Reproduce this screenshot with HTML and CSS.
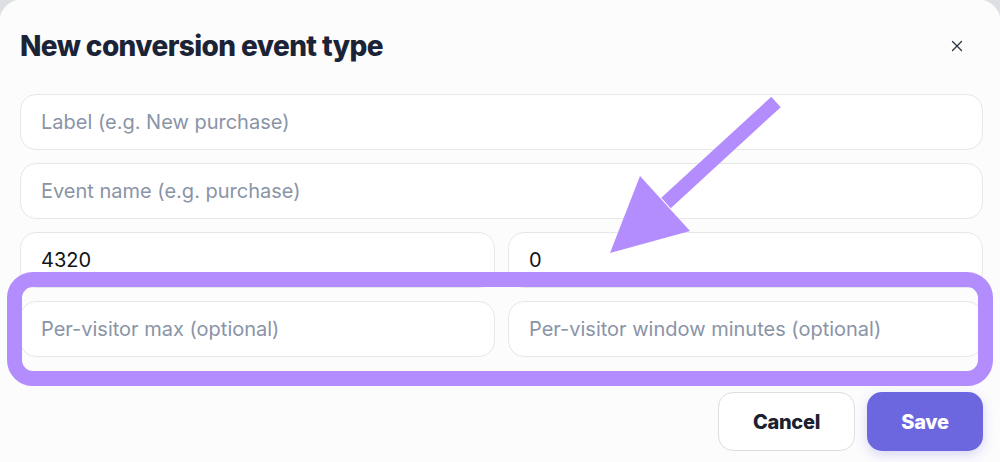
FILE: index.html
```html
<!DOCTYPE html>
<html lang="en">
<head>
<meta charset="utf-8">
<title>New conversion event type</title>
<link rel="stylesheet" href="styles.css">
</head>
<body>
<div class="modal">
  <div class="modal-header">
    <h1 class="modal-title">New conversion event type</h1>
    <button class="close-btn" aria-label="Close">
      <svg width="12" height="12" viewBox="0 0 12 12"><path d="M1.5 1.5L10.5 10.5M10.5 1.5L1.5 10.5" stroke="#2b3242" stroke-width="1.3" stroke-linecap="round"/></svg>
    </button>
  </div>
  <div class="fields">
    <div class="field"><span class="placeholder">Label (e.g. New purchase)</span></div>
    <div class="field"><span class="placeholder">Event name (e.g. purchase)</span></div>
    <div class="field-row">
      <div class="field"><span class="value">4320</span></div>
      <div class="field"><span class="value">0</span></div>
    </div>
    <div class="field-row">
      <div class="field"><span class="placeholder">Per-visitor max (optional)</span></div>
      <div class="field"><span class="placeholder">Per-visitor window minutes (optional)</span></div>
    </div>
  </div>
  <div class="actions">
    <button class="btn btn-cancel">Cancel</button>
    <button class="btn btn-save">Save</button>
  </div>
</div>
<div class="highlight"></div>
<svg class="arrow" width="1000" height="462" viewBox="0 0 1000 462">
  <path d="M776 102 L666 203" stroke="#b38dfd" stroke-width="14" fill="none"/>
  <polygon points="610,253 640,176 690,231" fill="#b38dfd"/>
</svg>
</body>
</html>
```

FILE: styles.css
```css
* { box-sizing: border-box; }
html, body { margin: 0; padding: 0; }
body {
  background: #dedfe3;
  font-family: Inter, "Noto Sans", "Liberation Sans", sans-serif;
  width: 1000px;
  height: 462px;
  overflow: hidden;
  position: relative;
}
.modal {
  margin: -1px -1px 0 -1px;
  height: 480px;
  background: #fcfcfd;
  border-radius: 24px;
  padding: 1px 18px 0 21px;
}
.modal-header {
  height: 94px;
  display: flex;
  align-items: center;
  justify-content: space-between;
  padding-bottom: 2px;
}
.modal-title {
  margin: 0;
  font-size: 28px;
  font-weight: 800;
  color: #1b2436;
  letter-spacing: -0.6px;
}
.close-btn {
  background: none;
  border: 0;
  padding: 0;
  width: 12px;
  height: 12px;
  margin-right: 20px;
  display: flex;
}
.fields {
  display: flex;
  flex-direction: column;
  gap: 13px;
}
.field-row {
  display: grid;
  grid-template-columns: 1fr 1fr;
  gap: 13px;
}
.field {
  height: 56px;
  background: #fff;
  border: 1px solid #e6e7eb;
  border-radius: 16px;
  display: flex;
  align-items: center;
  padding: 0 20px;
  font-size: 20px;
}
.placeholder { color: #8a94a7; }
.value { color: #111318; }
.actions {
  display: flex;
  justify-content: flex-end;
  gap: 12px;
  margin-top: 35px;
}
.btn {
  height: 59px;
  border-radius: 15px;
  font-family: Inter, "Noto Sans", sans-serif;
  font-size: 20px;
  font-weight: 800;
  letter-spacing: -0.3px;
  cursor: pointer;
}
.btn-cancel {
  width: 137px;
  background: #fff;
  border: 1px solid #dedee2;
  color: #1b2131;
}
.btn-save {
  width: 116px;
  background: #6c67df;
  border: 0;
  color: #fff;
  box-shadow: 0 4px 12px rgba(108, 103, 223, 0.25);
}
.highlight {
  position: absolute;
  left: 7px;
  top: 272px;
  width: 986px;
  height: 114px;
  border: 15px solid #b38dfd;
  border-radius: 26px;
  pointer-events: none;
}
.arrow {
  position: absolute;
  left: 0;
  top: 0;
  pointer-events: none;
}
```
